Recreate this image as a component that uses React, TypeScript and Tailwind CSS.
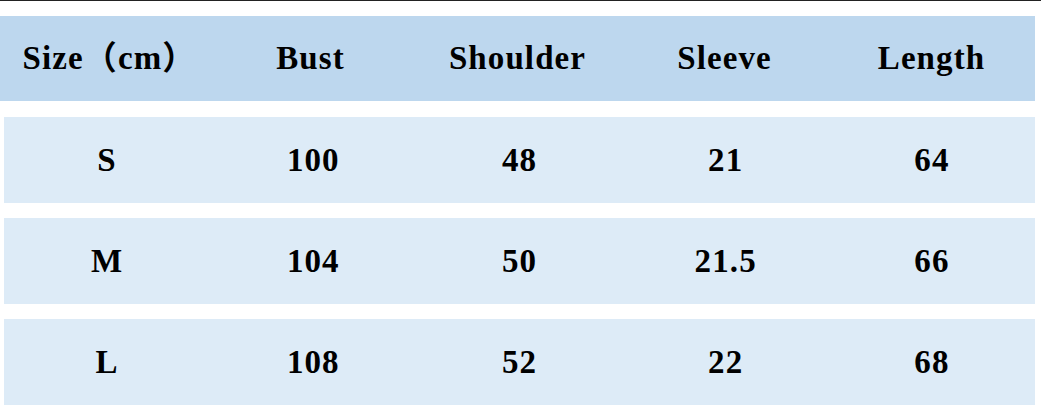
const headers = ['Size（cm）', 'Bust', 'Shoulder', 'Sleeve', 'Length']

const rows = [
  ['S', '100', '48', '21', '64'],
  ['M', '104', '50', '21.5', '66'],
  ['L', '108', '52', '22', '68'],
]

const App: React.FC = () => {
  return (
    <div
      className="w-[1041px] h-[408px] bg-white border-t border-[#222222] text-black font-bold text-[33px] tracking-[1.1px]"
      style={{ fontFamily: '"Liberation Serif", "Noto Sans CJK SC", serif' }}
    >
      <div className="pt-[15px] pr-[6px]">
        <div className="grid grid-cols-5 h-[85px] items-center bg-[#bdd7ee]">
          {headers.map((h, i) => (
            <div key={h} className={i === 0 ? 'text-center leading-none pl-[12px]' : 'text-center leading-none'}>
              {h}
            </div>
          ))}
        </div>
        <div className="mt-[16px] ml-[4px] flex flex-col gap-[15px]">
          {rows.map((row) => (
            <div key={row[0]} className="grid grid-cols-5 h-[86px] items-center bg-[#ddebf7]">
              {row.map((cell, i) => (
                <div key={i} className="text-center leading-none">
                  {cell}
                </div>
              ))}
            </div>
          ))}
        </div>
      </div>
    </div>
  )
}

export default App
